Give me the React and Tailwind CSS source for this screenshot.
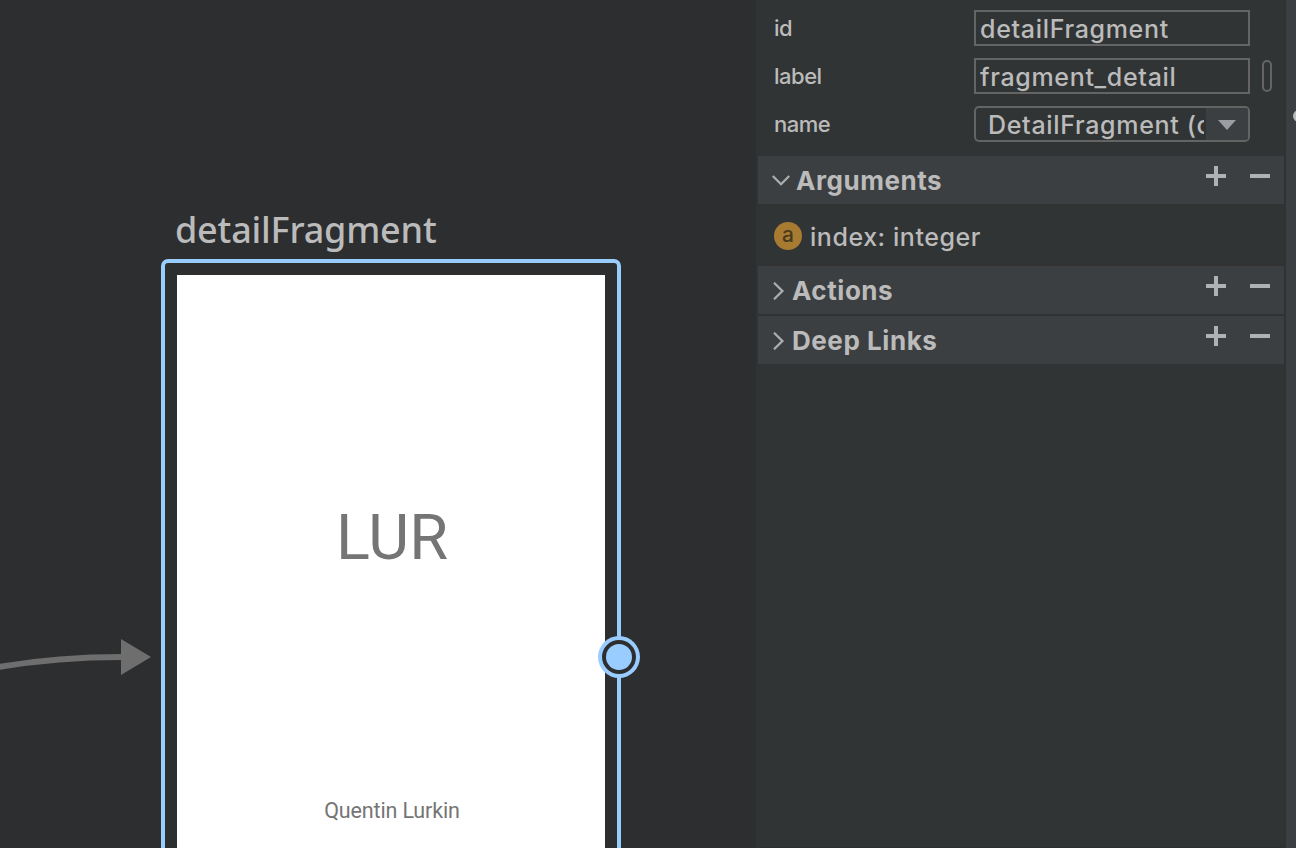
import React from "react";

const Plus = () => (
  <svg width="20" height="20" viewBox="0 0 20 20" fill="#afb1b3">
    <path d="M8 0h4v8h8v4h-8v8H8v-8H0V8h8z" />
  </svg>
);

const Minus = () => (
  <svg width="20" height="20" viewBox="0 0 20 20" fill="#afb1b3">
    <path d="M0 8h20v4H0z" />
  </svg>
);

const Chevron = ({ open }) =>
  open ? (
    <svg className="mt-px" width="18" height="11" viewBox="0 0 18 11" fill="none" stroke="#adadad" strokeWidth="2.3">
      <path d="M0.8 1 9 9.2 17.2 1" />
    </svg>
  ) : (
    <svg className="mt-0.5 ml-px" width="12" height="18" viewBox="0 0 12 18" fill="none" stroke="#adadad" strokeWidth="2.3">
      <path d="M1 0.8 9.4 9 1 17.2" />
    </svg>
  );

function SectionHeader({ title, open }) {
  return (
    <div className="flex h-12 shrink-0 items-center bg-[#3c3f41] pr-3.5 pl-3.5">
      <Chevron open={open} />
      <h2 className={`${open ? "ml-[6px]" : "ml-[7px]"} flex-1 text-[26px] leading-8 font-bold tracking-[0.55px] text-[#bbbbbb]`}>
        <span className="relative top-px">{title}</span>
      </h2>
      <div className="flex gap-6 pb-2">
        <Plus />
        <Minus />
      </div>
    </div>
  );
}

function Row({ name, children }) {
  return (
    <div className="flex h-9 items-center">
      <label className="w-[200px] shrink-0 text-[22px] leading-9 font-[450] tracking-[-0.5px] text-[#bbbbbb]">{name}</label>
      {children}
    </div>
  );
}

function TextField({ value }) {
  return (
    <div className="h-9 w-[276px] shrink-0 overflow-hidden border-2 border-[#646464] pl-1 text-[25px] leading-[34px] font-[450] tracking-[0.68px] text-[#bbbbbb]">
      {value}
    </div>
  );
}

function Canvas() {
  return (
    <main className="relative h-full w-[756px] shrink-0 overflow-hidden bg-[#2d2e30]">
      <svg className="absolute top-[630px] left-0" width="160" height="60" viewBox="0 0 160 60">
        <path d="M-4 37.5Q55 27 123 27" fill="none" stroke="#6e6e6e" strokeWidth="6" />
        <path d="M121 9v36l30-18z" fill="#6e6e6e" />
      </svg>
      <div className="absolute top-[206px] left-[175px] font-['Noto_Sans',sans-serif] text-[36px] leading-[48px] font-medium tracking-[-0.2px] whitespace-nowrap text-[#bbbbbb]">
        detailFragment
      </div>
      <div className="absolute top-[259px] left-[161px] h-[620px] w-[460px] rounded-[7px] border-4 border-[#99ccff] p-3">
        <div className="flex h-full flex-col items-center bg-white font-[Roboto,sans-serif] text-[#757575]">
          <div className="mt-[223px] ml-[2px] text-[63px] leading-20">LUR</div>
          <div className="mt-[219px] ml-[2px] text-[21.5px] leading-7 tracking-[-0.15px]">Quentin Lurkin</div>
        </div>
      </div>
      <svg className="absolute top-[636px] left-[598px]" width="42" height="42" viewBox="0 0 42 42">
        <circle cx="21" cy="21" r="21" fill="#99ccff" />
        <circle cx="21" cy="21" r="17" fill="#2d2e30" />
        <circle cx="21" cy="21" r="13" fill="#99ccff" />
      </svg>
    </main>
  );
}

export default function App() {
  return (
    <div className="flex h-[848px] w-[1296px] overflow-hidden bg-[#323232] font-[Inter,sans-serif]">
      <Canvas />
      <div className="w-0.5 shrink-0 bg-[#313233]" />
      <aside className="flex w-[526px] shrink-0 flex-col border-b border-[#2f2f31] bg-[#313435]">
        <div className="flex h-[156px] flex-col gap-3 px-4 pt-2.5">
          <Row name="id">
            <TextField value="detailFragment" />
          </Row>
          <Row name="label">
            <TextField value="fragment_detail" />
            <div className="ml-3 h-8 w-2.5 shrink-0 rounded-full border-2 border-[#646464]" />
          </Row>
          <Row name="name">
            <div className="flex h-9 w-[276px] shrink-0 overflow-hidden rounded-[5px] border-2 border-[#646464]">
              <div className="ml-3 w-[216px] overflow-hidden text-[25px] leading-[34px] font-[450] tracking-[0.68px] whitespace-nowrap text-[#bbbbbb]">
                DetailFragment (c
              </div>
              <div className="ml-0.5 flex flex-1 items-center justify-center bg-[#3c3f41] pt-0.5">
                <svg width="18" height="10" viewBox="0 0 18 10" fill="#9a9da1">
                  <path d="M0 0h18l-9 10z" />
                </svg>
              </div>
            </div>
          </Row>
        </div>
        <SectionHeader title="Arguments" open />
        <div className="flex h-[62px] shrink-0 items-center border-y-2 border-[#323232] pt-0.5 pl-4">
          <div className="flex h-7 w-7 items-center justify-center rounded-full bg-[#a87b32] text-[21px] leading-7 font-medium text-[#4a3a1d]">
            <span className="relative -top-px">a</span>
          </div>
          <span className="relative top-0.5 ml-2 text-[25px] font-[450] tracking-[0.55px] text-[#bbbbbb]">index: integer</span>
        </div>
        <SectionHeader title="Actions" />
        <div className="h-0.5 shrink-0 bg-[#323232]" />
        <SectionHeader title="Deep Links" />
      </aside>
      <div className="w-0.5 shrink-0 bg-[#323232]" />
      <div className="flex flex-1 justify-end overflow-hidden bg-[#3c3f41] pt-[110px]">
        <div className="-mr-[9px] h-3 w-3 shrink-0 rounded-full bg-[#bbbbbb]" />
      </div>
    </div>
  );
}
